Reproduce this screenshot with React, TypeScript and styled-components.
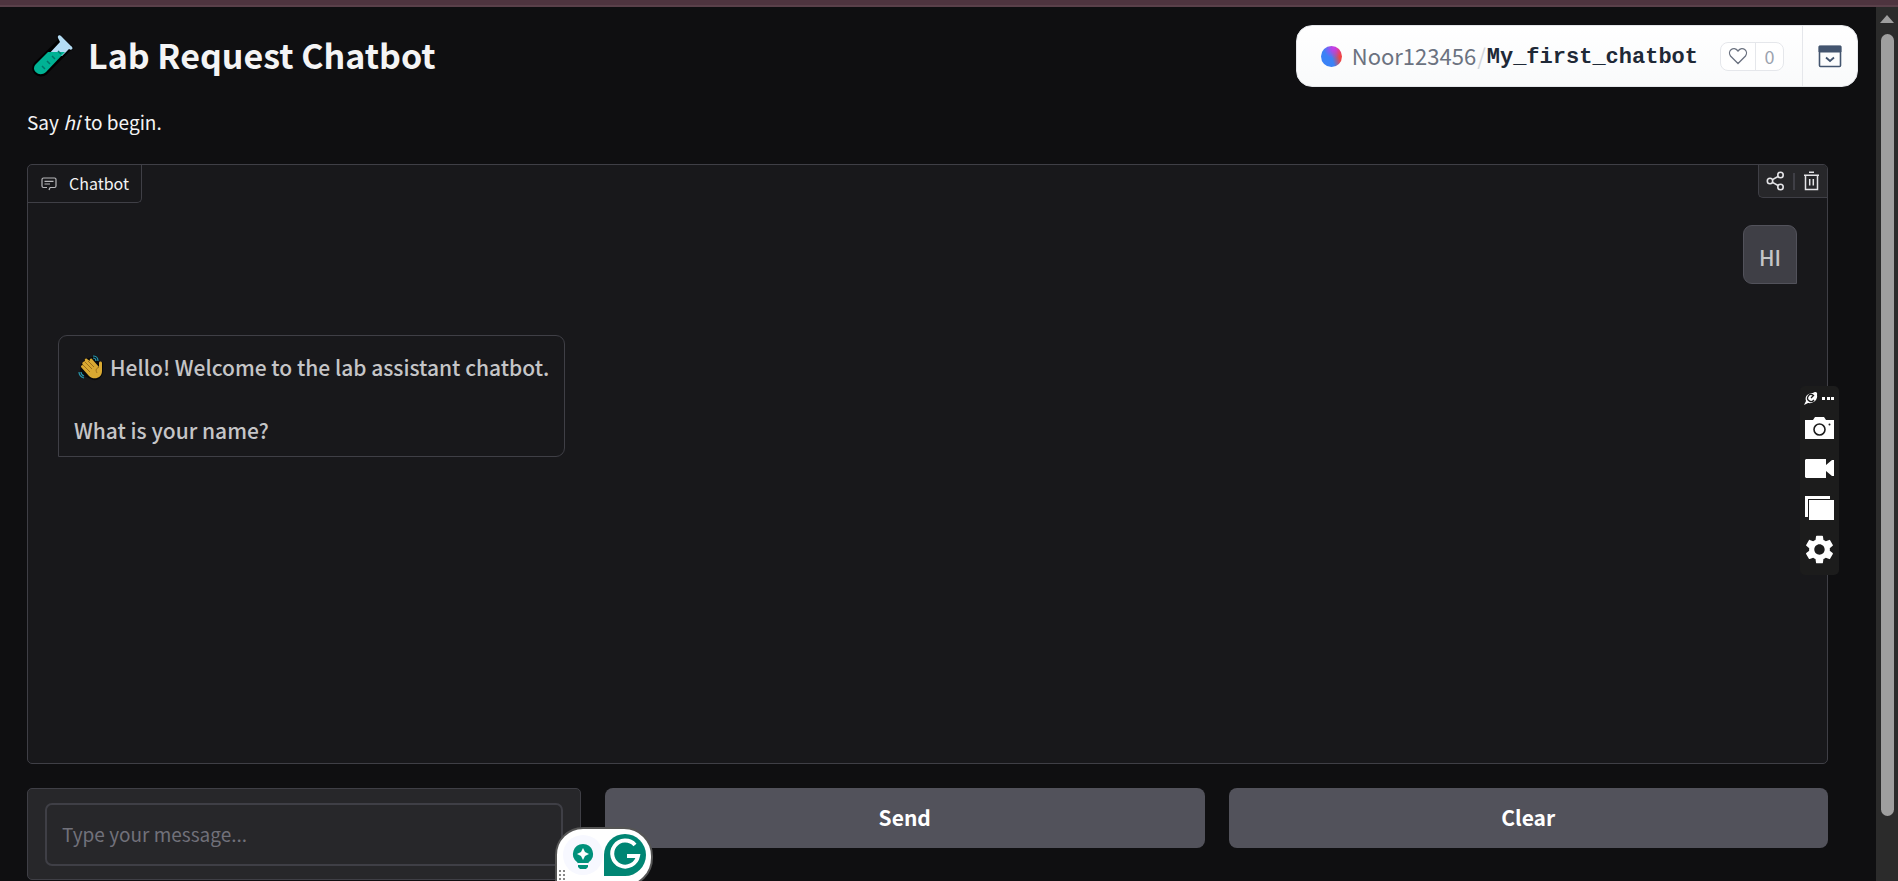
import React from "react";
import styled, { createGlobalStyle } from "styled-components";

const sans = `"Noto Sans CJK SC", "Open Sans", sans-serif`;

const Global = createGlobalStyle`
  *, *::before, *::after { box-sizing: border-box; }
  html, body { margin: 0; background: #0f0f11; }
  body { font-family: ${sans}; color: #f4f4f5; overflow: hidden; }
  button, input { font-family: inherit; }
  p, h1 { margin: 0; }
`;

const Window = styled.div`
  position: relative;
  height: 100vh;
  display: flex;
  flex-direction: column;
  overflow: hidden;
`;

const TopEdge = styled.div`
  flex: none;
  height: 7px;
  background: #4e343f;
  border-bottom: 2px solid #5a404a;
`;

const Viewport = styled.div`
  flex: 1;
  min-height: 0;
  display: flex;
`;

const Page = styled.main`
  flex: 1;
  min-width: 0;
  padding: 18px 48px 0 27px;
  overflow: hidden;
`;

const Track = styled.div`
  flex: none;
  width: 22px;
  background: #2b2b2b;
  display: flex;
  flex-direction: column;
  align-items: center;
  padding: 8px 0 65px;
  gap: 11px;
`;

const ArrowUp = styled.div`
  border: 7px solid transparent;
  border-top-width: 0;
  border-bottom: 8px solid #9f9f9f;
`;

const Thumb = styled.div`
  width: 13px;
  flex: 1;
  border-radius: 7px;
  background: #9f9f9f;
`;

const Title = styled.h1`
  display: flex;
  align-items: center;
  gap: 13px;
  padding-left: 4px;
  height: 60px;
  font-size: 34px;
  line-height: 60px;
  font-weight: 600;
`;

const Intro = styled.p`
  margin-top: 21px;
  height: 32px;
  font-size: 19px;
  line-height: 32px;
`;

const ChatPanel = styled.section`
  position: relative;
  margin-top: 26px;
  height: 600px;
  border: 1px solid #3f3f46;
  border-radius: 5px;
  background: #18181b;
`;

const PanelLabel = styled.h2`
  position: absolute;
  top: 0;
  left: 0;
  margin: 0;
  display: flex;
  align-items: center;
  gap: 12px;
  height: 38px;
  padding: 0 12px 0 13px;
  border: solid #3f3f46;
  border-width: 0 1px 1px 0;
  border-radius: 4px 0 5px 0;
  font-size: 16px;
  line-height: 37px;
  font-weight: 400;
`;

const PanelTools = styled.div`
  position: absolute;
  top: 0;
  right: 0;
  display: flex;
  align-items: center;
  gap: 8px;
  height: 33px;
  padding: 0 7px;
  border: solid #3f3f46;
  border-width: 0 0 1px 1px;
  border-radius: 0 4px 0 5px;
  background: #27272a;
`;

const IconButton = styled.button`
  display: grid;
  place-items: center;
  padding: 0;
  border: 0;
  background: none;
  color: inherit;
`;

const ToolRule = styled.span`
  width: 2px;
  height: 17px;
  background: #3f3f46;
`;

const Log = styled.div`
  display: flex;
  flex-direction: column;
  gap: 51px;
  padding: 60px 30px;
`;

const Bubble = styled.div<{ $own?: boolean }>`
  align-self: ${(p) => (p.$own ? "flex-end" : "flex-start")};
  padding: 15px 15px 10px;
  border: 1px solid ${(p) => (p.$own ? "#52525b" : "#3f3f46")};
  border-radius: ${(p) => (p.$own ? "9px 9px 0 9px" : "9px 9px 9px 0")};
  background: ${(p) => (p.$own ? "#3f3f46" : "#18181b")};
  color: #c5c5c7;
  font-size: 21px;
  font-weight: 500;
  line-height: 32px;
`;

const Line = styled.p`
  display: flex;
  align-items: center;
  gap: 5px;
  & + & { margin-top: 31px; }
  svg { margin-left: 4px; }
`;

const Controls = styled.form`
  display: grid;
  grid-template-columns: 554px 1fr 1fr;
  align-items: start;
  gap: 24px;
  margin-top: 24px;
`;

const InputBlock = styled.label`
  display: block;
  padding: 14px 17px 13px;
  border: 1px solid #3f3f46;
  border-radius: 5px;
  background: #27272a;
`;

const TextBox = styled.input`
  display: block;
  width: 100%;
  height: 63px;
  padding: 0 15px 3px;
  border: 2px solid #3f3f46;
  border-radius: 7px;
  background: #27272a;
  color: #f4f4f5;
  font-size: 19px;
  &::placeholder { color: #71717a; opacity: 1; }
`;

const Action = styled.button`
  height: 60px;
  padding: 0 0 2px;
  border: 0;
  border-radius: 8px;
  background: #52525b;
  color: #fff;
  font-size: 21px;
  font-weight: 600;
`;

const SpacePill = styled.header`
  position: absolute;
  top: 25px;
  right: 40px;
  display: flex;
  align-items: stretch;
  height: 62px;
  border: 1px solid #e5e7eb;
  border-radius: 16px;
  background: linear-gradient(#fff, #f9fafb);
  overflow: hidden;
`;

const SpaceInfo = styled.div`
  display: flex;
  align-items: center;
  padding: 0 18px 0 24px;
  font-size: 22px;
  line-height: 30px;
`;

const Avatar = styled.span`
  width: 21px;
  height: 21px;
  margin-right: 10px;
  border-radius: 50%;
  background: radial-gradient(circle at 60% 10%, #c73bf0 0, transparent 45%),
    linear-gradient(75deg, #3b82f6 50%, #ef4444 80%);
`;

const Owner = styled.a`
  padding-bottom: 2px;
  color: #6b7280;
  text-decoration: none;
`;

const Slash = styled.span`
  margin: 0 1px;
  padding-bottom: 2px;
  color: #d1d5db;
`;

const SpaceName = styled.a`
  padding: 3px 4px 0 0;
  color: #1f2937;
  font: 700 22px/28px "Liberation Mono", monospace;
  text-decoration: none;
`;

const Likes = styled.button`
  display: flex;
  align-items: stretch;
  height: 29px;
  margin-left: 18px;
  padding: 0;
  border: 1px solid #e5e7eb;
  border-radius: 8px;
  background: #fff;
  font-size: 18px;
  line-height: 26px;
`;

const LikePart = styled.span<{ $count?: boolean }>`
  display: grid;
  place-items: center;
  width: ${(p) => (p.$count ? 28 : 34)}px;
  border-left: ${(p) => (p.$count ? "1px solid #e5e7eb" : "0")};
  color: ${(p) => (p.$count ? "#9ca3af" : "#6b7280")};
`;

const Collapse = styled(IconButton)`
  width: 55px;
  border-left: 1px solid #e5e7eb;
`;

const CaptureBar = styled.aside`
  position: absolute;
  top: 386px;
  right: 59px;
  width: 39px;
  height: 189px;
  border-radius: 5px;
  background: #1c1c1c;
`;

const Writer = styled.aside`
  position: absolute;
  left: 555px;
  bottom: -6px;
  width: 98px;
  height: 60px;
`;

export default function App() {
  return (
    <Window>
      <Global />
      <TopEdge />
      <Viewport>
        <Page>
          <Title>
            <TestTube />
            Lab Request Chatbot
          </Title>
          <Intro>
            Say <em>hi</em> to begin.
          </Intro>
          <ChatPanel>
            <PanelLabel>
              <ChatIcon />
              Chatbot
            </PanelLabel>
            <PanelTools>
              <IconButton aria-label="Share"><ShareIcon /></IconButton>
              <ToolRule />
              <IconButton aria-label="Clear chat"><TrashIcon /></IconButton>
            </PanelTools>
            <Log>
              <Bubble $own>HI</Bubble>
              <Bubble>
                <Line><Wave /> Hello! Welcome to the lab assistant chatbot.</Line>
                <Line>What is your name?</Line>
              </Bubble>
            </Log>
          </ChatPanel>
          <Controls onSubmit={(e) => e.preventDefault()}>
            <InputBlock>
              <TextBox aria-label="Message" placeholder="Type your message..." />
            </InputBlock>
            <Action type="submit">Send</Action>
            <Action type="reset">Clear</Action>
          </Controls>
        </Page>
        <Track>
          <ArrowUp />
          <Thumb />
        </Track>
      </Viewport>
      <SpacePill>
        <SpaceInfo>
          <Avatar />
          <Owner href="#owner">Noor123456</Owner>
          <Slash>/</Slash>
          <SpaceName href="#space">My_first_chatbot</SpaceName>
          <Likes aria-label="Like">
            <LikePart><HeartIcon /></LikePart>
            <LikePart $count>0</LikePart>
          </Likes>
        </SpaceInfo>
        <Collapse aria-label="Collapse header"><CollapseIcon /></Collapse>
      </SpacePill>
      <CaptureBar><CaptureIcons /></CaptureBar>
      <Writer><WriterBadge /></Writer>
    </Window>
  );
}

function TestTube() {
  return (
    <svg width="44" height="44" viewBox="0 0 44 44" aria-hidden="true">
      <path d="M28 3 L41 15 L38 17 L15 40 C8 46 -2 37 5 30 L28 8 Z" fill="#000" stroke="#000" strokeWidth="3" strokeLinejoin="round" />
      <path d="M27 5C26 2 29 1 31 4L40 13C43 15 41 18 38 16L31 23H16L29 9Z" fill="#b4dcf4" />
      <path d="M17 19 H34 L15 39 C8 45 -1 37 5 31 Z" fill="#00b294" />
      <path d="M27 18l3 3M21 23l3 3M16 28l3 3M11 33l3 3" stroke="#00766a" strokeWidth="1.5" />
    </svg>
  );
}

function ChatIcon() {
  return (
    <svg width="16" height="14" viewBox="0 0 16 14" fill="none" stroke="#b8b8bb" strokeWidth="1.2" aria-hidden="true">
      <path d="M9 10.500H13.500a1.500 1.500 0 0 0 1.500-1.500V2.500A1.500 1.500 0 0 0 13.500 1H2.500A1.500 1.500 0 0 0 1 2.500V9a1.500 1.500 0 0 0 1.500 1.500H6M9 10.500L8 13M3.500 4.300h9M3.500 7h5.500" />
    </svg>
  );
}

function ShareIcon() {
  return (
    <svg width="19" height="20" viewBox="0 0 19 20" fill="none" stroke="#e4e4e7" strokeWidth="1.6" aria-hidden="true">
      <circle cx="4" cy="10" r="2.700" />
      <circle cx="14.500" cy="4" r="2.700" />
      <circle cx="14.500" cy="16" r="2.700" />
      <path d="M6.500 8.600L12 5.500M6.500 11.400L12 14.500" />
    </svg>
  );
}

function TrashIcon() {
  return (
    <svg width="17" height="20" viewBox="0 0 17 20" fill="none" stroke="#e4e4e7" strokeWidth="1.500" aria-hidden="true">
      <path d="M6 1.200H11M1 4.200H16M2.500 4.200V18.500H14.500V4.200M6.700 8V14.500M10.300 8V14.500" />
    </svg>
  );
}

function Wave() {
  return (
    <svg width="27" height="27" viewBox="0 0 27 27" aria-hidden="true">
      <path d="M3 10L7 5L14 3L18 1L21 8L25 8V17C25 23 20 27 15 26L6 22L2 17Z" fill="#000" opacity=".6" />
      <path d="M3 13l8 9c4 4 13 3 13-5V9c0-2-3-2-3 0v4L14 5c-1-1-3 0-2 2L9 5C8 4 6 5 7 7L5 8c-1 1-1 2 0 3-2 0-2 1-2 2Z" fill="#d9a932" />
      <path d="M7 8l7 7M10 7l6 6M5 11l7 7M21 13c-4 2-3 4-2 6" fill="none" stroke="#9b6f1c" strokeWidth="1" />
      <path d="M15 2c3 0 5 2 5 5M15 4c2 0 3 1 3 3M1 18c0 3 2 5 5 6M3 18c0 2 1 3 3 4" fill="none" stroke="#2896ad" strokeWidth="1.200" />
    </svg>
  );
}

function HeartIcon() {
  return (
    <svg width="20" height="18" viewBox="0 0 20 18" fill="none" stroke="currentColor" strokeWidth="1.300" aria-hidden="true">
      <path d="M10 16.500L2.500 9C-1 4.500 5.500-2 10 4C14.500-2 21 4.500 17.500 9Z" />
    </svg>
  );
}

function CollapseIcon() {
  return (
    <svg width="24" height="23" viewBox="0 0 24 23" fill="none" stroke="#43556f" aria-hidden="true">
      <rect x="1.500" y="1.500" width="21" height="20" rx="1" strokeWidth="1.600" />
      <path d="M1 1H23V7H1Z" fill="#43556f" />
      <path d="M8 12.500L12 16L16 12.500" strokeWidth="1.800" />
    </svg>
  );
}

function CaptureIcons() {
  return (
    <svg width="39" height="189" viewBox="0 0 39 189" fill="#fff" aria-hidden="true">
      <path d="M4 19L6 15C4 9 10 7 13 7C15 5 18 6 17 9C18 13 14 18 8 17Z" />
      <path d="M13 9A3.500 3.500 0 1 0 14 14M11 12l3-3" fill="none" stroke="#1c1c1c" strokeWidth="1.300" />
      <path d="M22 11h3v3h-3zM27 11h3v3h-3zM31 11h3v3h-3z" />
      <path d="M5 34H13L15 31H24L26 34H34V53H5Z" />
      <circle cx="19.500" cy="43.500" r="5.500" fill="none" stroke="#1c1c1c" strokeWidth="1.600" />
      <circle cx="29.500" cy="38.500" r="1" fill="#1c1c1c" />
      <path d="M6 73H26V79L32 74H34V90H32L26 85V92H6L5 91V74Z" />
      <path d="M5 110H30V113H8V131H5Z" />
      <path d="M9 114H34V134H9Z" />
      <path transform="translate(2.200 146.200) scale(1.440)" d="M19.140 12.940c.04-.3.060-.610.060-.940 0-.320-.020-.640-.070-.940l2.030-1.580a.490.490 0 0 0 .120-.610l-1.920-3.320a.488.488 0 0 0-.590-.220l-2.390.960c-.5-.380-1.030-.7-1.620-.940l-.360-2.540a.484.484 0 0 0-.480-.410h-3.840c-.240 0-.430.170-.470.410l-.360 2.540c-.590.240-1.130.570-1.620.940l-2.390-.960c-.220-.080-.470 0-.590.220L2.740 8.870c-.120.210-.080.470.120.610l2.030 1.580c-.05.300-.09.630-.09.940s.02.640.07.940l-2.030 1.580a.490.490 0 0 0-.120.610l1.920 3.320c.120.220.370.290.590.220l2.390-.960c.500.380 1.030.7 1.620.940l.360 2.540c.05.240.240.410.480.410h3.840c.240 0 .440-.170.470-.410l.360-2.540c.590-.240 1.130-.560 1.620-.940l2.390.960c.220.080.470 0 .590-.220l1.920-3.320c.120-.220.070-.470-.120-.610l-2.010-1.580zM12 15.600c-1.980 0-3.600-1.620-3.600-3.600s1.620-3.600 3.600-3.600 3.600 1.620 3.600 3.600-1.620 3.600-3.600 3.600z" />
    </svg>
  );
}

function WriterBadge() {
  return (
    <svg width="98" height="60" viewBox="0 0 98 60" aria-hidden="true">
      <path d="M1 60V28A27 27 0 0 1 28 1H69A28 28 0 0 1 97 29V31A28 28 0 0 1 69 59Z" fill="#fff" stroke="#555" strokeWidth="2" />
      <circle cx="28" cy="28" r="20" fill="#f7f8ff" />
      <path d="M28 17a10 10 0 0 0-6 18l2 3h8l2-3A10 10 0 0 0 28 17Z" fill="#00917b" />
      <path d="M28 21l2 4 4 2-4 2-2 4-2-4-4-2 4-2Z" fill="#fff" />
      <path d="M23 36h10v2H23z" fill="#f7f8ff" />
      <path d="M23 38h10v2l-2 2h-6l-2-2z" fill="#00917b" />
      <path d="M49 49V28A21 21 0 1 1 70 49Z" fill="#008573" />
      <path d="M80 18A13 13 0 1 0 83 29H72" fill="none" stroke="#fff" strokeWidth="4" />
      <g fill="#888">
        <path d="M4 43h2v2H4zM8 43h2v2H8zM4 47h2v2H4zM8 47h2v2H8zM4 51h2v2H4zM8 51h2v2H8z" />
      </g>
    </svg>
  );
}
